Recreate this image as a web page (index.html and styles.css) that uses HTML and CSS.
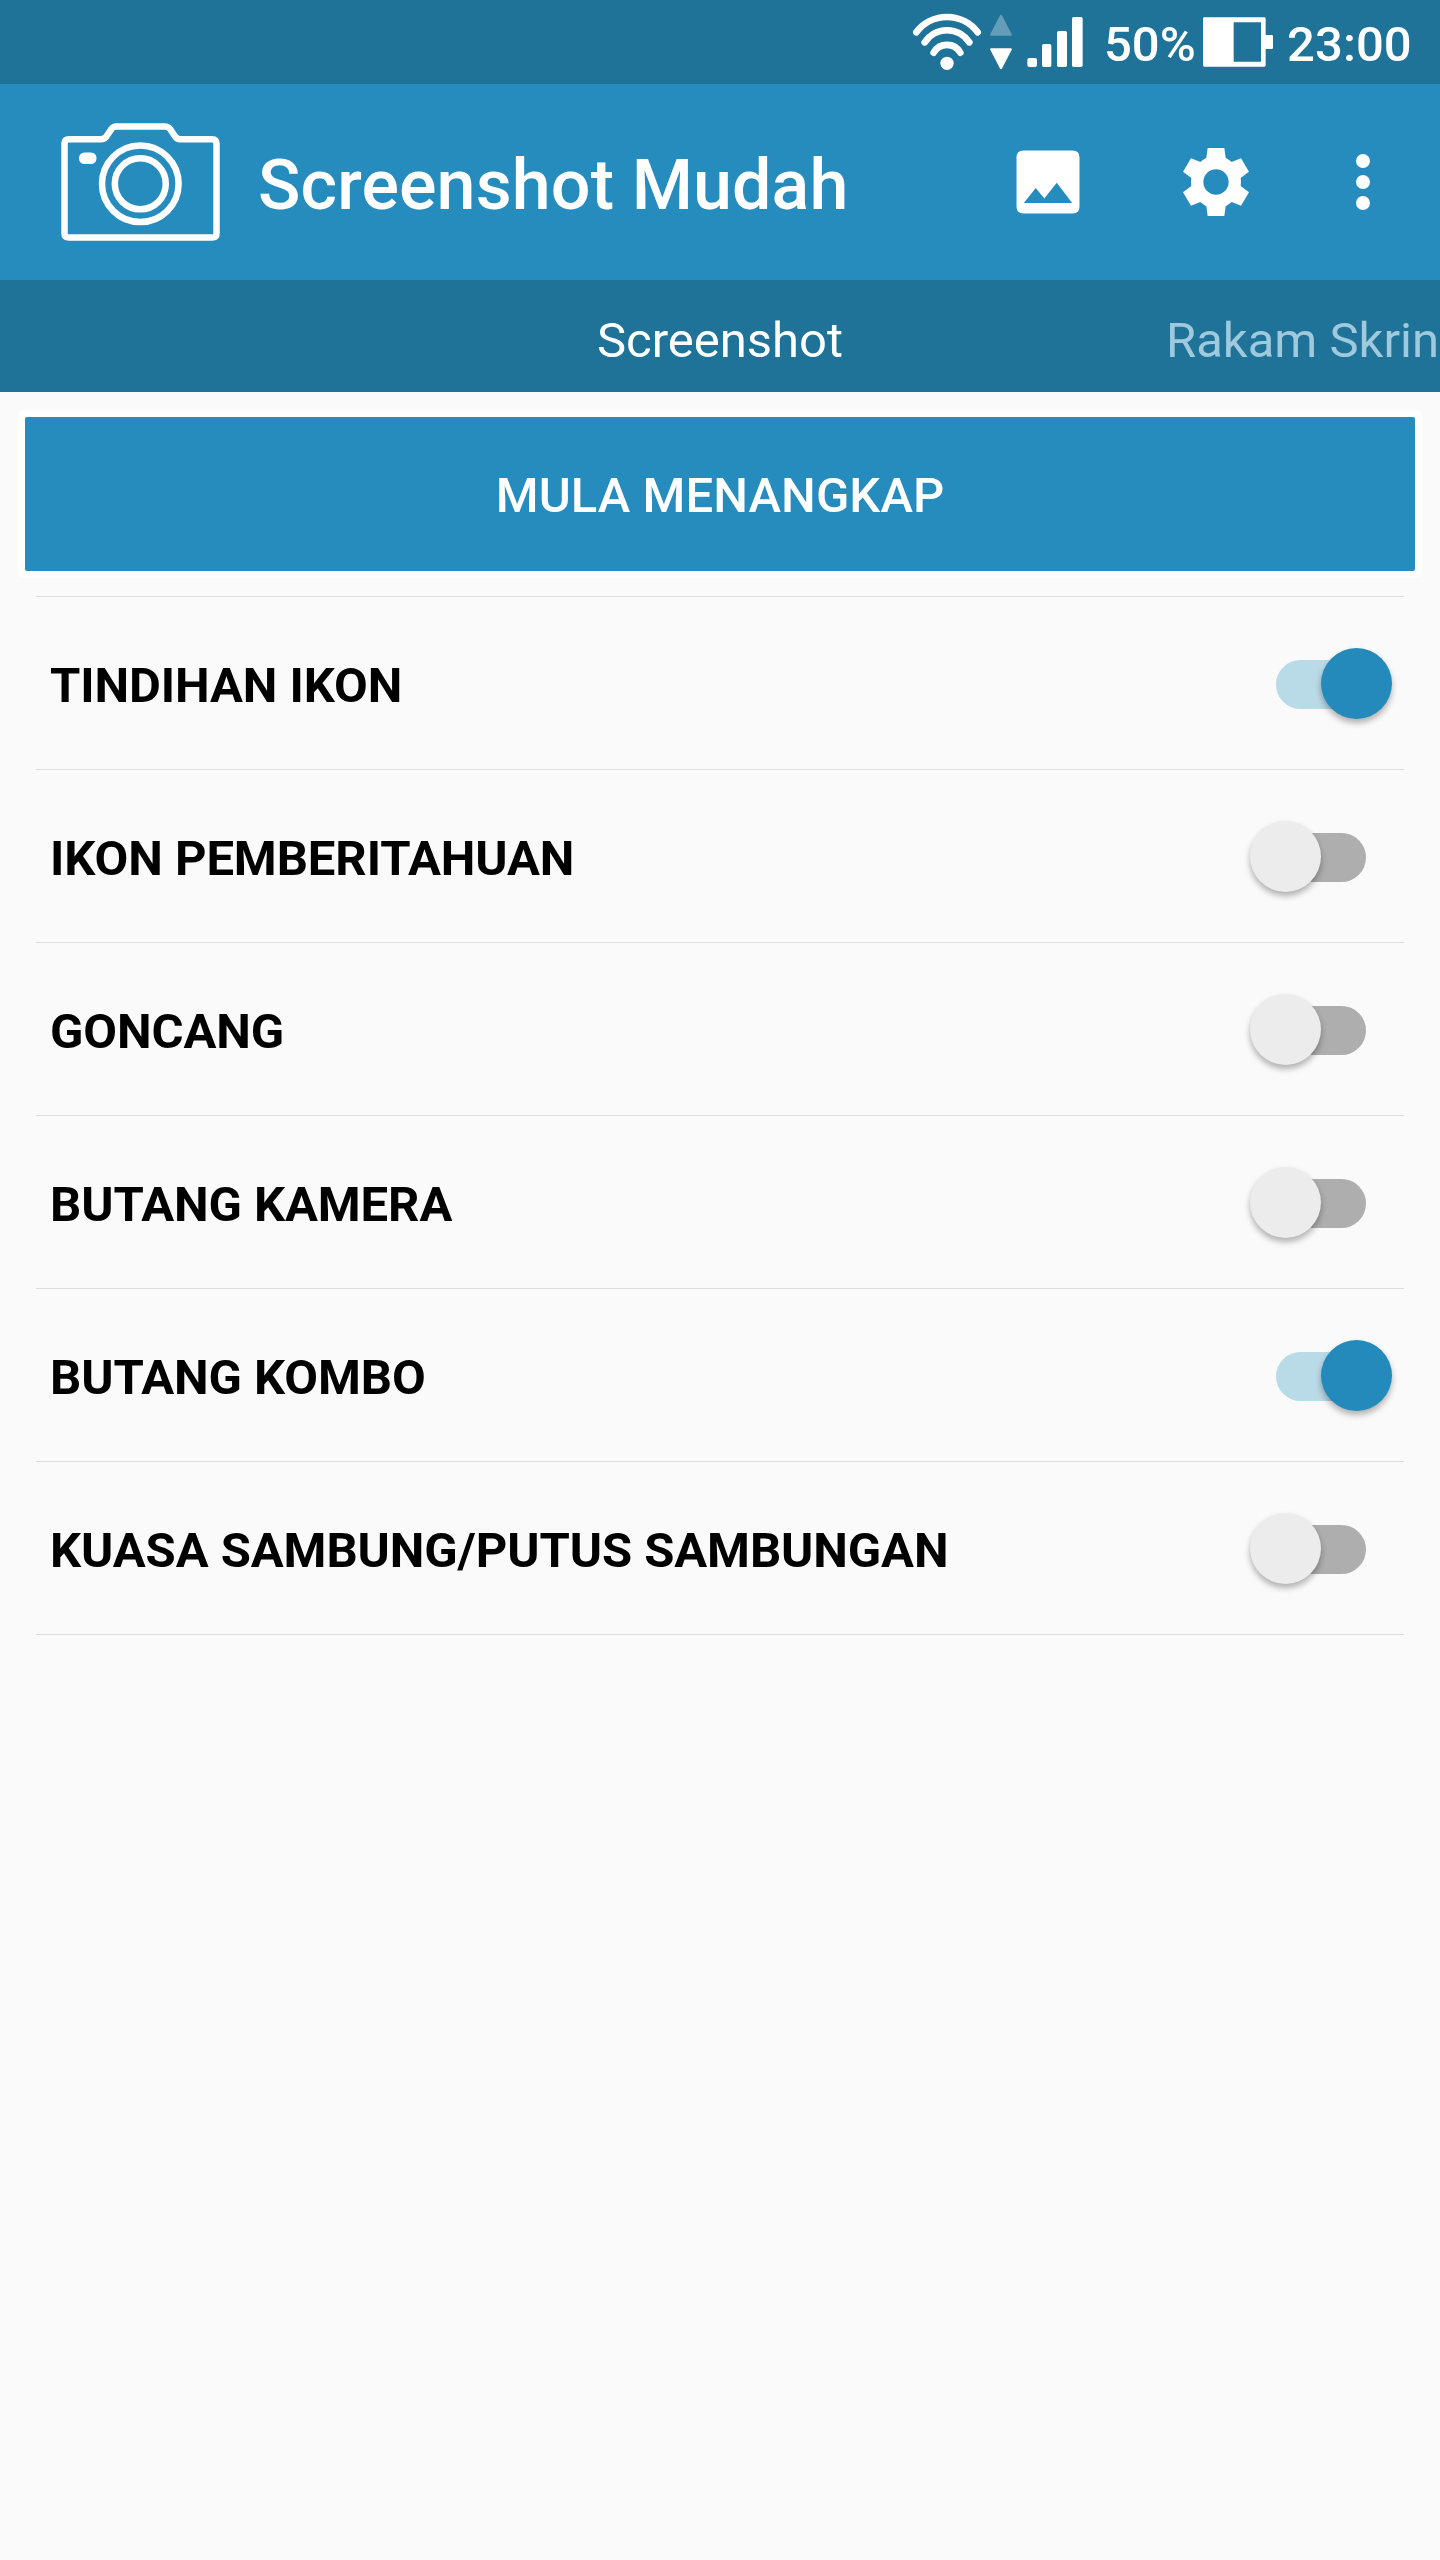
FILE: index.html
```
<!DOCTYPE html>
<html lang="ms">
<head>
<meta charset="UTF-8">
<meta name="viewport" content="width=device-width, initial-scale=1.0">
<title>Screenshot Mudah</title>
<link rel="stylesheet" href="styles.css">
</head>
<body>

<div class="status-bar">
  <svg class="wifi" viewBox="36 0 210 252">
    <path d="M49 97A115 115 0 0 1 233 97M74 127A80 80 0 0 1 208 127M101 158A46 46 0 0 1 181 158"/>
    <circle cx="141" cy="190" r="20"/>
  </svg>
  <svg class="arrows" viewBox="264 0 78 252">
    <path class="up" d="M274 104L303 48L332 104Z"/>
    <path d="M274 148L332 148L303 204Z"/>
  </svg>
  <svg class="signal" viewBox="378 0 174 252">
    <rect x="382" y="174" width="29" height="27" rx="6"/>
    <rect x="426" y="132" width="28" height="69" rx="5"/>
    <rect x="471" y="93" width="30" height="108" rx="5"/>
    <rect x="516" y="51" width="32" height="150" rx="5"/>
  </svg>
  <span class="percent">50%</span>
  <svg class="battery" viewBox="369 0 210 252">
    <path fill-rule="evenodd" d="M373 52H553Q557 52 557 56V105H575Q579 105 579 109V143Q579 147 575 147H557V196Q557 200 553 200H373Q369 200 369 196V56Q369 52 373 52ZM461 67V185H543V67Z"/>
  </svg>
  <span class="clock">23:00</span>
</div>

<header class="app-bar">
  <svg class="logo" viewBox="61 123 159 118">
    <path d="M69 139.200H101Q104 139.200 106 137L111.500 129Q113.500 126.500 116 126.500H165Q168 126.500 170 129L175.500 137Q177.500 139.200 180 139.200H212Q216.500 139.200 216.500 143.500V233.500Q216.500 237.500 212 237.500H69Q64.500 237.500 64.500 233.500V143.500Q64.500 139.200 69 139.200Z"/>
    <circle cx="140.300" cy="183.800" r="38.300"/>
    <circle cx="140.300" cy="183.800" r="25.500"/>
    <rect class="flash" x="79" y="152.500" width="17.500" height="11.500" rx="5.500"/>
  </svg>
  <h1>Screenshot Mudah</h1>
  <div class="actions">
    <svg class="gallery" viewBox="0 0 24 24">
      <path fill-rule="evenodd" d="M5 3H19Q21 3 21 5V19Q21 21 19 21H5Q3 21 3 19V5Q3 3 5 3ZM5.100 18H18.900L14.500 12.200L10.950 16.700L8.500 13.700Z"/>
    </svg>
    <svg class="settings" viewBox="-126 -126 252 252">
      <path fill-rule="evenodd" d="M-25 -102H25L29 -73Q39 -67 47 -60L75 -71L99 -31L74 -12Q76 0 74 12L99 31L75 71L47 60Q39 67 29 73L25 102H-25L-29 73Q-39 67 -47 60L-75 71L-99 31L-74 12Q-76 0 -74 -12L-99 -31L-75 -71L-47 -60Q-39 -67 -29 -73ZM0 -38A38 38 0 0 0 0 38A38 38 0 0 0 0 -38Z"/>
    </svg>
    <svg class="more" viewBox="0 0 24 24">
      <circle cx="12" cy="6" r="2"/>
      <circle cx="12" cy="12" r="2"/>
      <circle cx="12" cy="18" r="2"/>
    </svg>
  </div>
</header>

<nav class="tabs">
  <span class="tab"></span>
  <span class="tab active">Screenshot</span>
  <span class="tab next">Rakam Skrin</span>
</nav>

<main>
  <button class="start">MULA MENANGKAP</button>

  <ul class="options">
    <li><span>TINDIHAN IKON</span><i class="switch on"></i></li>
    <li><span>IKON PEMBERITAHUAN</span><i class="switch"></i></li>
    <li><span>GONCANG</span><i class="switch"></i></li>
    <li><span>BUTANG KAMERA</span><i class="switch"></i></li>
    <li><span>BUTANG KOMBO</span><i class="switch on"></i></li>
    <li><span>KUASA SAMBUNG/PUTUS SAMBUNGAN</span><i class="switch"></i></li>
  </ul>
</main>

</body>
</html>
```
FILE: styles.css
```
* {
  box-sizing: border-box;
}

body {
  margin: 0;
  min-height: 100vh;
  background-color: #fafafa;
  font-family: Roboto, sans-serif;
  font-size: 49px;
  overflow-x: hidden;
}

svg {
  display: block;
  flex: none;
  fill: #fff;
}

/* Status bar */
.status-bar {
  display: flex;
  align-items: center;
  height: 84px;
  padding-left: 912px;
  background-color: #207398;
  color: #fff;
  font-weight: 500;
  white-space: nowrap;
}

.status-bar svg {
  height: 84px;
}

.wifi {
  width: 70px;
}

.wifi path {
  fill: none;
  stroke: #fff;
  stroke-width: 20;
  stroke-linecap: round;
}

.arrows {
  width: 26px;
  margin-left: 6px;
}

.arrows path {
  stroke: #fff;
  stroke-width: 7;
  stroke-linejoin: round;
}

.arrows .up {
  opacity: 0.3;
}

.signal {
  width: 58px;
  margin-left: 12px;
}

.percent {
  width: 99px;
  margin-left: 20px;
  padding-top: 4px;
}

.battery {
  width: 70px;
}

.clock {
  margin-left: 14px;
  padding-top: 4px;
  letter-spacing: 0.1px;
}

/* App bar */
.app-bar {
  display: flex;
  align-items: center;
  height: 196px;
  padding: 0 35px 0 61px;
  background-color: #268cbd;
  color: #fff;
}

.logo {
  width: 159px;
  height: 118px;
  fill: none;
  stroke: #fff;
  stroke-width: 6.5;
}

.logo .flash {
  fill: #fff;
  stroke: none;
}

h1 {
  margin: 5px 0 0 38px;
  font-size: 70px;
  font-weight: 500;
  letter-spacing: 0.12px;
  white-space: nowrap;
}

.actions {
  display: flex;
  margin-left: auto;
}

.actions svg {
  width: 84px;
  height: 84px;
}

.settings {
  margin-left: 84px;
}

.more {
  margin-left: 63px;
}

/* Tabs */
.tabs {
  display: grid;
  grid-template-columns: 1fr auto 1fr;
  align-items: center;
  height: 112px;
  background-color: #207398;
  color: #fff;
  padding-top: 8px;
}

.next {
  justify-self: end;
  padding-right: 1px;
  color: #9fc9dd;
}

/* Content */
main {
  padding: 25px 25px 0;
}

.start {
  display: block;
  width: 100%;
  height: 154px;
  padding: 3px 0 0;
  border: none;
  border-radius: 2px;
  box-shadow: 0 0 0 7px #fff;
  background-color: #268cbd;
  color: #fff;
  font: 500 49px Roboto, sans-serif;
  letter-spacing: 0.07px;
}

.options {
  list-style: none;
  margin: 25px 11px 0;
  padding: 0;
  border-top: 1px solid #dedede;
}

.options li {
  display: flex;
  align-items: center;
  justify-content: space-between;
  height: 173px;
  padding: 3px 38px 0 14px;
  border-bottom: 1px solid #dedede;
  font-weight: 700;
  letter-spacing: -0.08px;
  color: #000;
}

.options span {
  padding-top: 1px;
}

.switch {
  position: relative;
  width: 90px;
  height: 49px;
  border-radius: 25px;
  background-color: #aeaeae;
}

/* Knob sits over the track and overhangs it */
.switch::after {
  content: "";
  position: absolute;
  top: -12px;
  left: -26px;
  width: 71px;
  height: 71px;
  border-radius: 50%;
  background-color: #ececec;
  box-shadow: 0 4px 6px rgba(0, 0, 0, 0.3);
}

.switch.on {
  background-color: #b9dae7;
}

.switch.on::after {
  left: 45px;
  background-color: #248abb;
}
```
